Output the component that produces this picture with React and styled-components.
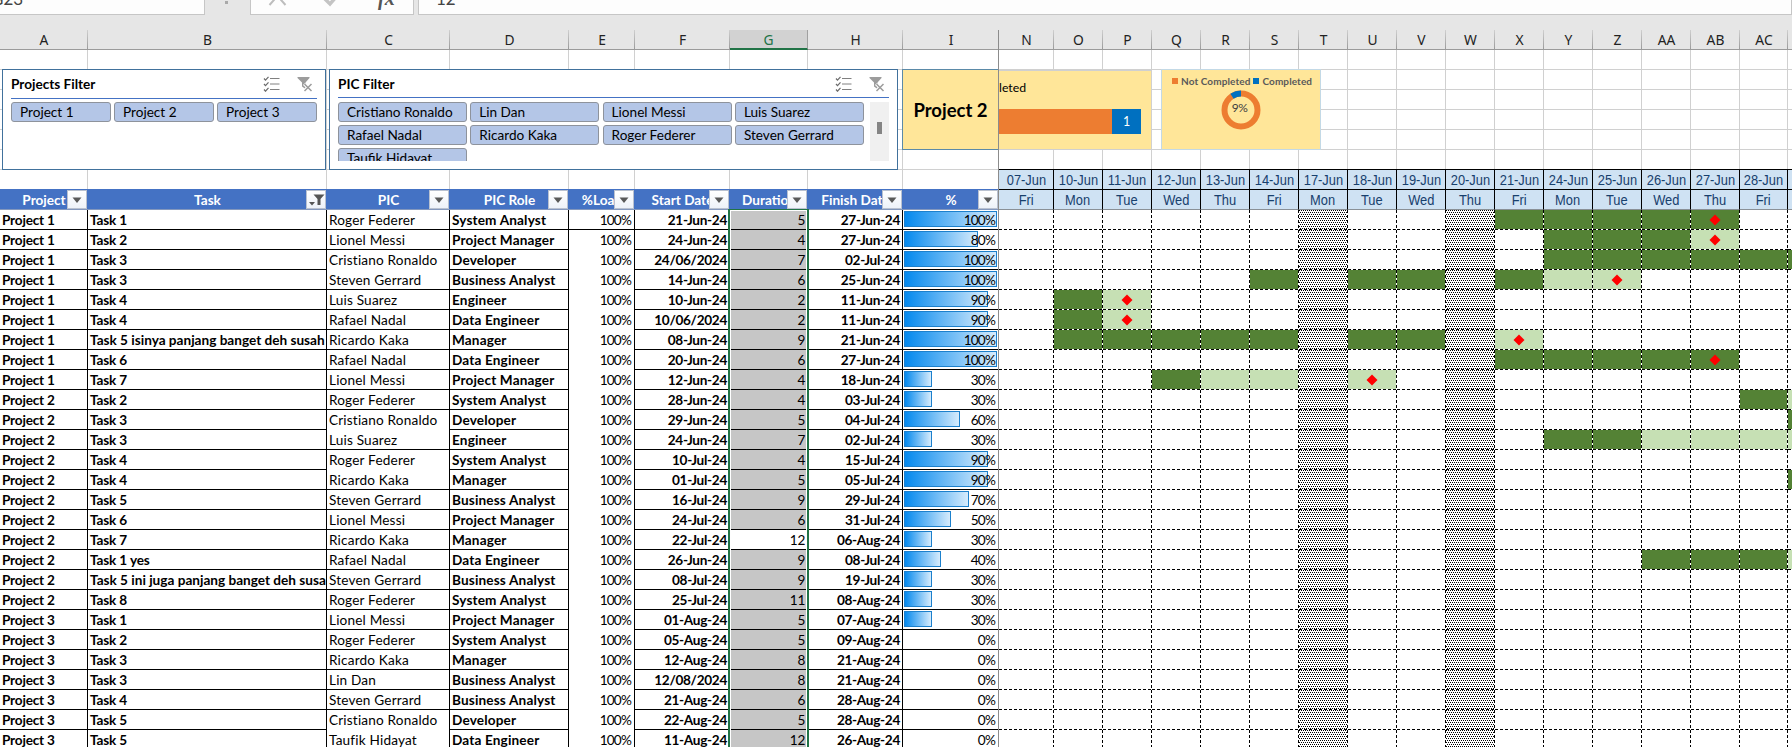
import React from "react";
import styled, { createGlobalStyle, css } from "styled-components";

const Global = createGlobalStyle`
  *, *::before, *::after { box-sizing: border-box; }
  html, body { margin: 0; padding: 0; overflow: hidden; background: #fff; }
`;

const GRID = "#d0d0d0";
const sans = `Lato, "Open Sans", sans-serif`;

const LEFT = [
  { id: "A", w: 88, title: "Project" },
  { id: "B", w: 239, title: "Task", filtered: true },
  { id: "C", w: 123, title: "PIC" },
  { id: "D", w: 119, title: "PIC Role" },
  { id: "E", w: 66, title: "%Load" },
  { id: "F", w: 95, title: "Start Date" },
  { id: "G", w: 78, title: "Duration" },
  { id: "H", w: 95, title: "Finish Date" },
  { id: "I", w: 96, title: "%" },
];

const DAYS = [
  ["N", "07-Jun", "Fri", 55],
  ["O", "10-Jun", "Mon"],
  ["P", "11-Jun", "Tue"],
  ["Q", "12-Jun", "Wed"],
  ["R", "13-Jun", "Thu"],
  ["S", "14-Jun", "Fri"],
  ["T", "17-Jun", "Mon"],
  ["U", "18-Jun", "Tue"],
  ["V", "19-Jun", "Wed"],
  ["W", "20-Jun", "Thu"],
  ["X", "21-Jun", "Fri"],
  ["Y", "24-Jun", "Mon"],
  ["Z", "25-Jun", "Tue"],
  ["AA", "26-Jun", "Wed"],
  ["AB", "27-Jun", "Thu"],
  ["AC", "28-Jun", "Fri", 48],
  ["", "", "", 49],
].map(([id, date, day, w]) => ({ id, date, day, w: w || 49 }));

/* gantt string, one character per day: # done, - remaining, * done + finish, o remaining + finish */
const ROWS = [
  ["Project 1", "Task 1", "Roger Federer", "System Analyst", "21-Jun-24", 5, "27-Jun-24", 100, "..........####*.."],
  ["Project 1", "Task 2", "Lionel Messi", "Project Manager", "24-Jun-24", 4, "27-Jun-24", 80, "...........###o.."],
  ["Project 1", "Task 3", "Cristiano Ronaldo", "Developer", "24/06/2024", 7, "02-Jul-24", 100, "...........######"],
  ["Project 1", "Task 3", "Steven Gerrard", "Business Analyst", "14-Jun-24", 6, "25-Jun-24", 100, ".....#.##.#-o...."],
  ["Project 1", "Task 4", "Luis Suarez", "Engineer", "10-Jun-24", 2, "11-Jun-24", 90, ".#o.............."],
  ["Project 1", "Task 4", "Rafael Nadal", "Data Engineer", "10/06/2024", 2, "11-Jun-24", 90, ".#o.............."],
  ["Project 1", "Task 5 isinya panjang banget deh susah", "Ricardo Kaka", "Manager", "08-Jun-24", 9, "21-Jun-24", 100, ".#####.##.o......"],
  ["Project 1", "Task 6", "Rafael Nadal", "Data Engineer", "20-Jun-24", 6, "27-Jun-24", 100, "..........####*.."],
  ["Project 1", "Task 7", "Lionel Messi", "Project Manager", "12-Jun-24", 4, "18-Jun-24", 30, "...#--.o........."],
  ["Project 2", "Task 2", "Roger Federer", "System Analyst", "28-Jun-24", 4, "03-Jul-24", 30, "...............#-"],
  ["Project 2", "Task 3", "Cristiano Ronaldo", "Developer", "29-Jun-24", 5, "04-Jul-24", 60, "................#"],
  ["Project 2", "Task 3", "Luis Suarez", "Engineer", "24-Jun-24", 7, "02-Jul-24", 30, "...........##----"],
  ["Project 2", "Task 4", "Roger Federer", "System Analyst", "10-Jul-24", 4, "15-Jul-24", 90, "................."],
  ["Project 2", "Task 4", "Ricardo Kaka", "Manager", "01-Jul-24", 5, "05-Jul-24", 90, "................#"],
  ["Project 2", "Task 5", "Steven Gerrard", "Business Analyst", "16-Jul-24", 9, "29-Jul-24", 70, "................."],
  ["Project 2", "Task 6", "Lionel Messi", "Project Manager", "24-Jul-24", 6, "31-Jul-24", 50, "................."],
  ["Project 2", "Task 7", "Ricardo Kaka", "Manager", "22-Jul-24", 12, "06-Aug-24", 30, "................."],
  ["Project 2", "Task 1 yes", "Rafael Nadal", "Data Engineer", "26-Jun-24", 9, "08-Jul-24", 40, ".............###-"],
  ["Project 2", "Task 5 ini juga panjang banget deh susah", "Steven Gerrard", "Business Analyst", "08-Jul-24", 9, "19-Jul-24", 30, "................."],
  ["Project 2", "Task 8", "Roger Federer", "System Analyst", "25-Jul-24", 11, "08-Aug-24", 30, "................."],
  ["Project 3", "Task 1", "Lionel Messi", "Project Manager", "01-Aug-24", 5, "07-Aug-24", 30, "................."],
  ["Project 3", "Task 2", "Roger Federer", "System Analyst", "05-Aug-24", 5, "09-Aug-24", 0, "................."],
  ["Project 3", "Task 3", "Ricardo Kaka", "Manager", "12-Aug-24", 8, "21-Aug-24", 0, "................."],
  ["Project 3", "Task 3", "Lin Dan", "Business Analyst", "12/08/2024", 8, "21-Aug-24", 0, "................."],
  ["Project 3", "Task 4", "Steven Gerrard", "Business Analyst", "21-Aug-24", 6, "28-Aug-24", 0, "................."],
  ["Project 3", "Task 5", "Cristiano Ronaldo", "Developer", "22-Aug-24", 5, "28-Aug-24", 0, "................."],
  ["Project 3", "Task 5", "Taufik Hidayat", "Data Engineer", "11-Aug-24", 12, "26-Aug-24", 0, "................."],
];
const OPEN_PIC = [2, 10, 12, 25];
const ACTIVE_ROW = 16;
const HOLIDAYS = ["T", "W"];

const Sheet = styled.div`
  position: relative;
  width: 1792px;
  height: 747px;
  overflow: hidden;
  background: #fff;
  color: #000;
  font-family: ${sans};
  font-size: 13.6px;
`;

/* formula bar */
const FormulaBar = styled.div`
  display: flex;
  height: 15px;
  background: #e6e6e6;
  overflow: hidden;
`;
const BarBox = styled.div`
  flex: ${(p) => (p.$w ? `0 0 ${p.$w}px` : "1")};
  height: 15px;
  overflow: hidden;
  background: #fdfdfd;
  border: solid #c6c6c6;
  border-width: 0 1px 1px ${(p) => (p.$first ? 0 : "1px")};
`;
const BarText = styled.div`
  margin: -12px 0 0 ${(p) => p.$x}px;
  font: 17px/22px ${sans};
  color: #444;
`;
const BarDots = styled.div`
  flex: 0 0 45px;
  height: 15px;
  padding: 1px 0 0 20px;
  &::before { content: ""; display: block; width: 3px; height: 3px; background: #a9a9a9; }
`;
const BarGap = styled.div`flex: 0 0 4px;`;

/* column letters */
const Letters = styled.div`
  display: flex;
  height: 35px;
  padding-top: 15px;
  background: #e6e6e6;
  border-bottom: 1px solid #9b9b9b;
`;
const Letter = styled.div`
  flex: 0 0 ${(p) => p.$w}px;
  height: 19px;
  text-align: center;
  font: 13.8px/20px "Noto Sans", "Open Sans", sans-serif;
  color: #222;
  background: linear-gradient(#cfcfcf, #9b9b9b) 100% 0 / 1px 100% no-repeat;
  ${(p) => p.$selected && css`
    height: 20px;
    color: #217346;
    background: #d2d2d2;
    border-right: 1px solid #a0a0a0;
    border-bottom: 2px solid #217346;
  `}
`;

/* plain grid area */
const Line = styled.div`
  display: flex;
  height: 20px;
`;
const Blank = styled.div`
  flex: 0 0 ${(p) => p.$w}px;
  border: solid ${GRID};
  border-width: 0 1px ${(p) => (p.$open ? 0 : "1px")} 0;
`;
const DateCell = styled.div`
  flex: 0 0 ${(p) => p.$w}px;
  display: flex;
  justify-content: center;
  margin-top: ${(p) => (p.$top ? "-1px" : 0)};
  border: solid #000;
  border-width: ${(p) => (p.$top ? "1px" : 0)} 1px 1px 0;
  border-bottom-color: ${(p) => (p.$top ? "#000" : "#8a9096")};
  background: #cfe2f3;
  color: #17406d;
  font: 14px/20px "Liberation Sans", Arial, sans-serif;
  span { display: block; transform: scaleX(0.92); white-space: nowrap; }
`;

/* table header */
const HeadCell = styled.div`
  position: relative;
  flex: 0 0 ${(p) => p.$w}px;
  height: 21px;
  margin-top: -1px;
  display: flex;
  justify-content: center;
  overflow: hidden;
  background: #4472c4;
  border-bottom: 1px solid #8397bd;
  color: #fff;
  font-weight: 700;
  line-height: 22px;
  white-space: nowrap;
`;
const FilterButton = styled.div`
  position: absolute;
  right: 1px;
  top: 1px;
  width: 20px;
  height: 19px;
  display: flex;
  align-items: center;
  justify-content: ${(p) => (p.$filtered ? "flex-end" : "center")};
  background: linear-gradient(#fff, #eef2f9);
  border: 1px solid #b9c1d0;
`;

/* table body */
const Cell = styled.div`
  position: relative;
  flex: 0 0 ${(p) => p.$w}px;
  padding: 0 ${(p) => p.$pr ?? 2}px 0 ${(p) => p.$pl ?? 2}px;
  overflow: hidden;
  white-space: nowrap;
  line-height: 20px;
  text-align: ${(p) => (p.$right ? "right" : "left")};
  font-weight: ${(p) => (p.$bold ? 700 : 400)};
  letter-spacing: ${(p) => p.$ls ?? 0}px;
  background: ${(p) => p.$bg || "transparent"};
  border: solid #000;
  border-width: 0 1px ${(p) => (p.$open ? 0 : "1px")} 0;
`;
const DataBar = styled.i`
  position: absolute;
  left: 1px;
  top: 1px;
  height: 16px;
  border: 1px solid #1c80cc;
  background: linear-gradient(90deg, #0489ee, #d6ebfc);
`;
const CellText = styled.span`position: relative;`;

const dash = (dir) => `repeating-linear-gradient(${dir}, #000 0 3px, #fff 3px 5px)`;
const dot = "conic-gradient(from 270deg at 1px 1px, #000 25%, transparent 0)";
const fills = {
  done: "linear-gradient(#548235, #548235)",
  left: "linear-gradient(#c6e0b4, #c6e0b4)",
  none: "linear-gradient(#fff, #fff)",
  hatch: `${dot} 0 0 / 2px 4px, ${dot} 1px 2px / 2px 4px, linear-gradient(#fff, #fff)`,
};
const DayCell = styled.div`
  flex: 0 0 ${(p) => p.$w}px;
  display: flex;
  align-items: center;
  justify-content: center;
  background:
    ${dash("90deg")} 0 100% / 100% 1px no-repeat,
    ${dash("180deg")} 100% 0 / 1px 100% no-repeat,
    ${(p) => fills[p.$fill]};
`;
const Diamond = styled.svg`
  display: block;
  width: 12px;
  height: 12px;
  margin-right: 1px;
`;

/* floating objects */
const Selection = styled.div`
  position: absolute;
  left: 728px;
  top: 209px;
  width: 81px;
  height: 560px;
  border: 2px solid #217346;
  border-top-width: 1px;
  box-shadow: inset 0 0 0 1px #fff;
`;
const FreezeLine = styled.div`
  position: absolute;
  left: 998px;
  top: 30px;
  width: 1px;
  height: 717px;
  background: #8c8c8c;
`;
const Slicer = styled.section`
  position: absolute;
  left: ${(p) => p.$x}px;
  top: 69px;
  width: ${(p) => p.$w}px;
  height: 101px;
  padding: 0 8px;
  background: #fff;
  border: 1px solid #41719c;
`;
const SlicerHead = styled.header`
  display: flex;
  align-items: center;
  height: ${(p) => p.$h}px;
  padding-right: 4px;
  border-bottom: 1px solid #4472c4;
  font-size: 13.6px;
  font-weight: 700;
  gap: 17px;
  svg { display: block; }
`;
const SlicerTitle = styled.span`
  flex: 1;
  letter-spacing: 0;
`;
const SlicerBody = styled.div`
  display: flex;
  justify-content: space-between;
  height: 59px;
  margin-top: ${(p) => p.$mt}px;
  overflow: hidden;
`;
const Chips = styled.div`
  display: grid;
  grid-template-columns: repeat(${(p) => p.$n}, ${(p) => p.$w}px);
  grid-auto-rows: 20px;
  gap: 3px ${(p) => p.$gap}px;
`;
const Chip = styled.button`
  padding: 0 0 0 8px;
  text-align: left;
  font: 13.6px/18px ${sans};
  color: #000;
  background: #b4c6e7;
  border: 1px solid #8e939c;
  border-radius: 3px;
  white-space: nowrap;
`;
const Scroll = styled.div`
  width: 19px;
  height: 59px;
  padding: 20px 7px 0;
  background: #f0f0f0;
  &::before { content: ""; display: block; width: 5px; height: 12px; background: #858585; }
`;
const ProjectBox = styled.div`
  position: absolute;
  left: 902px;
  top: 69px;
  width: 97px;
  height: 81px;
  display: flex;
  align-items: center;
  justify-content: center;
  background: #ffe699;
  border: 1px solid #5b8aa8;
  font-size: 18.5px;
  font-weight: 700;
  white-space: nowrap;
`;
const BarChart = styled.div`
  position: absolute;
  left: 999px;
  top: 70px;
  width: 153px;
  height: 80px;
  overflow: hidden;
  background: #ffe699;
  border: solid #d0d0d0;
  border-width: 1px 1px 1px 0;
  font-size: 12.3px;
`;
const ChartTitle = styled.div`
  height: 38px;
  padding-top: 9px;
  line-height: 15px;
`;
const Stack = styled.div`
  display: flex;
  height: 25px;
`;
const StackPart = styled.div`
  width: ${(p) => p.$w}px;
  background: ${(p) => p.$c};
  color: #fff;
  font-size: 12.5px;
  line-height: 25px;
  text-align: center;
`;
const PieCard = styled.div`
  position: absolute;
  left: 1161px;
  top: 69px;
  width: 160px;
  height: 81px;
  background: #ffe699;
  border: 1px solid #c3d9e6;
`;
const Legend = styled.div`
  display: flex;
  align-items: center;
  height: 14px;
  margin: 4px 0 0 10px;
  gap: 3px;
  color: #595959;
  font-size: 10px;
  font-weight: 700;
  letter-spacing: 0.1px;
  white-space: nowrap;
  i { width: 6px; height: 6px; background: #ed7d31; }
  i + span + i { background: #0070c0; }
`;
const Donut = styled.svg`
  display: block;
  margin: 1px 0 0 58px;
`;

const Arrow = () => (
  <svg width="10" height="6"><path d="M0.5 0.5h9L5 6z" fill="#595959" /></svg>
);
const FilteredArrow = () => (
  <svg width="16" height="14">
    <path d="M0 9h6l-3 3.5z" fill="#555" />
    <path d="M4.5 1.5h11l-4 4.5v6h-3v-6z" fill="#555" />
  </svg>
);
const MultiSelect = () => (
  <svg width="17" height="16" fill="none" stroke="#6b6b6b">
    <path d="M7 2.5h9.5M7 8h9.5M7 13.5h9.5" stroke="#808080" />
    <path d="M1 2.5l1.5 1.7L5.5 0.8M1 8l1.5 1.7L5.5 6.3M1 13.5l1.5 1.7L5.5 11.8" strokeWidth="1.2" />
  </svg>
);
const ClearFilter = () => (
  <svg width="16" height="16">
    <path d="M0.5 1h12v1L8.5 6.5V13L5 10.5V6.5L0.5 2z" fill="#9c9c9c" />
    <path d="M7 8l7.5 7M14.5 8L7 15" stroke="#fff" strokeWidth="3" />
    <path d="M7.5 8l7 7M14.5 8l-7 7" stroke="#9c9c9c" strokeWidth="1.5" />
  </svg>
);

const PEOPLE = ["Cristiano Ronaldo", "Lin Dan", "Lionel Messi", "Luis Suarez", "Rafael Nadal",
  "Ricardo Kaka", "Roger Federer", "Steven Gerrard", "Taufik Hidayat"];

function fillOf(mark, id) {
  if (HOLIDAYS.includes(id)) return "hatch";
  if (mark === "#" || mark === "*") return "done";
  if (mark === "-" || mark === "o") return "left";
  return "none";
}

function TaskRow({ row, index }) {
  const [project, task, pic, role, start, duration, finish, pct, marks] = row;
  return (
    <Line>
      <Cell $w={88} $bold $ls={-0.2}>{project}</Cell>
      <Cell $w={239} $bold $pl={2} $pr={0} $ls={task.length > 12 ? 0 : -0.15}>{task}</Cell>
      <Cell $w={123} $ls={0.18} $open={OPEN_PIC.includes(index)}>{pic}</Cell>
      <Cell $w={119} $bold $ls={0.15}>{role}</Cell>
      <Cell $w={66} $right $pr={3} $ls={-0.8} $open={index > 0}>100%</Cell>
      <Cell $w={95} $right $bold $ls={-0.3}>{start}</Cell>
      <Cell $w={78} $right $ls={-0.3} $bg={index === ACTIVE_ROW ? "#fff" : "#c6c6c6"}>{duration}</Cell>
      <Cell $w={95} $right $bold $ls={-0.3}>{finish}</Cell>
      <Cell $w={96} $right $pr={3} $ls={-0.8}>
        {pct > 0 && <DataBar style={{ width: Math.round(pct * 0.93) }} />}
        <CellText>{pct}%</CellText>
      </Cell>
      {DAYS.map((d, i) => (
        <DayCell key={i} $w={d.w} $fill={fillOf(marks[i], d.id)}>
          {(marks[i] === "*" || marks[i] === "o") && (
            <Diamond viewBox="0 0 12 12"><path d="M6 0.5L11.5 6L6 11.5L0.5 6z" fill="#f00" /></Diamond>
          )}
        </DayCell>
      ))}
    </Line>
  );
}

export default function App() {
  return (
    <Sheet>
      <Global />
      <FormulaBar>
        <BarBox $w={205} $first><BarText $x={-9}>G23</BarText></BarBox>
        <BarDots />
        <BarBox $w={164}>
          <svg width="160" height="14">
            <path d="M18.5 5L33.5 -12M19.5 -12L34.5 5" stroke="#bdbdbd" strokeWidth="2" />
            <path d="M73 -2l6 6L92 -11" stroke="#c4c4c4" strokeWidth="3.5" fill="none" />
            <text x="127" y="5" fontFamily="Liberation Serif" fontStyle="italic" fontWeight="700" fontSize="20" fill="#555">fx</text>
          </svg>
        </BarBox>
        <BarGap />
        <BarBox><BarText $x={17}>12</BarText></BarBox>
      </FormulaBar>
      <Letters>
        {LEFT.map((c) => <Letter key={c.id} $w={c.w} $selected={c.id === "G"}>{c.id}</Letter>)}
        {DAYS.map((d, i) => <Letter key={i} $w={d.w}>{d.id}</Letter>)}
      </Letters>
      {[0, 1, 2, 3, 4, 5].map((r) => (
        <Line key={r}>
          {[...LEFT, ...DAYS].map((c, i) => <Blank key={i} $w={c.w} />)}
        </Line>
      ))}
      <Line>
        {LEFT.map((c) => <Blank key={c.id} $w={c.w} $open />)}
        {DAYS.map((d, i) => <DateCell key={i} $w={d.w} $top><span>{d.date}</span></DateCell>)}
      </Line>
      <Line>
        {LEFT.map((c) => (
          <HeadCell key={c.id} $w={c.w}>
            {c.title}
            <FilterButton $filtered={c.filtered}>{c.filtered ? <FilteredArrow /> : <Arrow />}</FilterButton>
          </HeadCell>
        ))}
        {DAYS.map((d, i) => <DateCell key={i} $w={d.w}><span>{d.day}</span></DateCell>)}
      </Line>
      {ROWS.map((row, i) => <TaskRow key={i} row={row} index={i} />)}

      <Selection />
      <Slicer $x={2} $w={324}>
        <SlicerHead $h={29}>
          <SlicerTitle>Projects Filter</SlicerTitle>
          <MultiSelect />
          <ClearFilter />
        </SlicerHead>
        <SlicerBody $mt={3}>
          <Chips $n={3} $w={100} $gap={3}>
            {["Project 1", "Project 2", "Project 3"].map((n) => <Chip key={n}>{n}</Chip>)}
          </Chips>
        </SlicerBody>
      </Slicer>
      <Slicer $x={329} $w={569}>
        <SlicerHead $h={28}>
          <SlicerTitle>PIC Filter</SlicerTitle>
          <MultiSelect />
          <ClearFilter />
        </SlicerHead>
        <SlicerBody $mt={4}>
          <Chips $n={4} $w={129} $gap={3.3}>
            {PEOPLE.map((n) => <Chip key={n}>{n}</Chip>)}
          </Chips>
          <Scroll />
        </SlicerBody>
      </Slicer>
      <ProjectBox>Project 2</ProjectBox>
      <BarChart>
        <ChartTitle>leted</ChartTitle>
        <Stack>
          <StackPart $w={113} $c="#ed7d31" />
          <StackPart $w={29} $c="#0070c0">1</StackPart>
        </Stack>
      </BarChart>
      <PieCard>
        <Legend><i /><span>Not Completed</span><i /><span>Completed</span></Legend>
        <Donut width="42" height="42" viewBox="-21 -21 42 42">
          <circle r="16.5" fill="none" stroke="#ed7d31" strokeWidth="6" />
          <path d="M-9 -13.83A16.5 16.5 0 0 1 0 -16.5" fill="none" stroke="#0070c0" strokeWidth="6" />
          <text x="-1.5" y="1.5" textAnchor="middle" fontFamily="Lato" fontSize="12" letterSpacing="-0.5" fill="#404040">9%</text>
        </Donut>
      </PieCard>
      <FreezeLine />
    </Sheet>
  );
}
